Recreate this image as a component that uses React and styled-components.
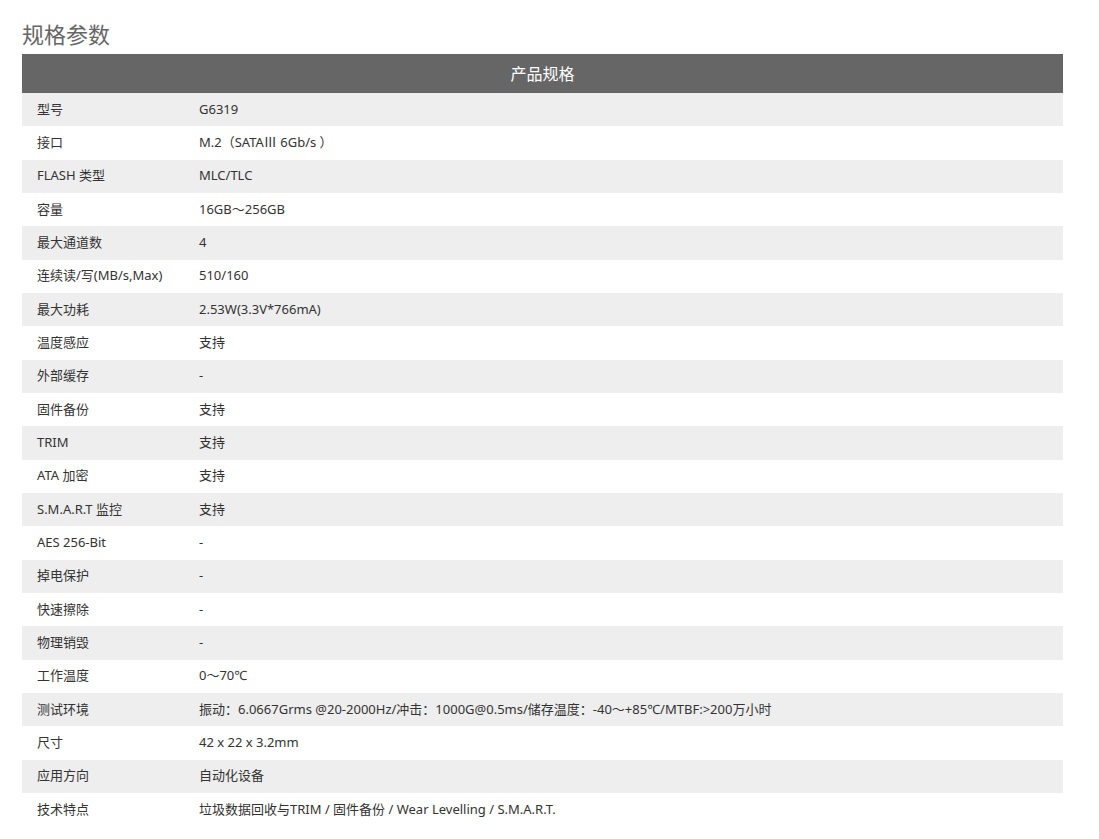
import React from "react";
import styled, { createGlobalStyle } from "styled-components";

const Global = createGlobalStyle`
  html, body { margin: 0; padding: 0; background: #fff; }
  body { font-family: "Noto Sans", "Noto Sans CJK SC", sans-serif; }
`;

const Page = styled.div`
  padding: 18px 36px 0 22px;
`;

const Title = styled.h2`
  margin: 0 0 6px;
  font-family: "Noto Sans CJK SC", sans-serif;
  font-size: 22px;
  line-height: 30px;
  font-weight: 400;
  color: #666;
`;

const Table = styled.div`
  width: 1041px;
  display: flex;
  flex-direction: column;
`;

const Head = styled.div`
  height: 39px;
  background: #666;
  color: #fff;
  font-family: "Noto Sans CJK SC", sans-serif;
  font-size: 16px;
  display: flex;
  align-items: center;
  justify-content: center;
  padding-bottom: 1px;
  box-sizing: border-box;
`;

const Row = styled.div`
  height: 33.34px;
  display: grid;
  grid-template-columns: 162px 1fr;
  align-items: center;
  background: ${(p) => (p.$alt ? "#eee" : "#fff")};
  font-size: 13px;
  line-height: 18px;
  color: #333;
  padding-bottom: 2px;
  box-sizing: border-box;
`;

const Cell = styled.div`
  padding-left: 15px;
  white-space: nowrap;
`;

const rows = [
  ["型号", "G6319"],
  ["接口", "M.2（SATAⅢ 6Gb/s ）"],
  ["FLASH 类型", "MLC/TLC"],
  ["容量", "16GB～256GB"],
  ["最大通道数", "4"],
  ["连续读/写(MB/s,Max)", "510/160"],
  ["最大功耗", "2.53W(3.3V*766mA)"],
  ["温度感应", "支持"],
  ["外部缓存", "-"],
  ["固件备份", "支持"],
  ["TRIM", "支持"],
  ["ATA 加密", "支持"],
  ["S.M.A.R.T 监控", "支持"],
  ["AES 256-Bit", "-"],
  ["掉电保护", "-"],
  ["快速擦除", "-"],
  ["物理销毁", "-"],
  ["工作温度", "0～70℃"],
  ["测试环境", "振动：6.0667Grms @20-2000Hz/冲击：1000G@0.5ms/储存温度：-40～+85℃/MTBF:>200万小时"],
  ["尺寸", "42 x 22 x 3.2mm"],
  ["应用方向", "自动化设备"],
  ["技术特点", "垃圾数据回收与TRIM / 固件备份 / Wear Levelling / S.M.A.R.T."],
];

export default function App() {
  return (
    <Page>
      <Global />
      <Title>规格参数</Title>
      <Table>
        <Head>产品规格</Head>
        {rows.map(([k, v], i) => (
          <Row key={k} $alt={i % 2 === 0}>
            <Cell>{k}</Cell>
            <Cell>{v}</Cell>
          </Row>
        ))}
      </Table>
    </Page>
  );
}
